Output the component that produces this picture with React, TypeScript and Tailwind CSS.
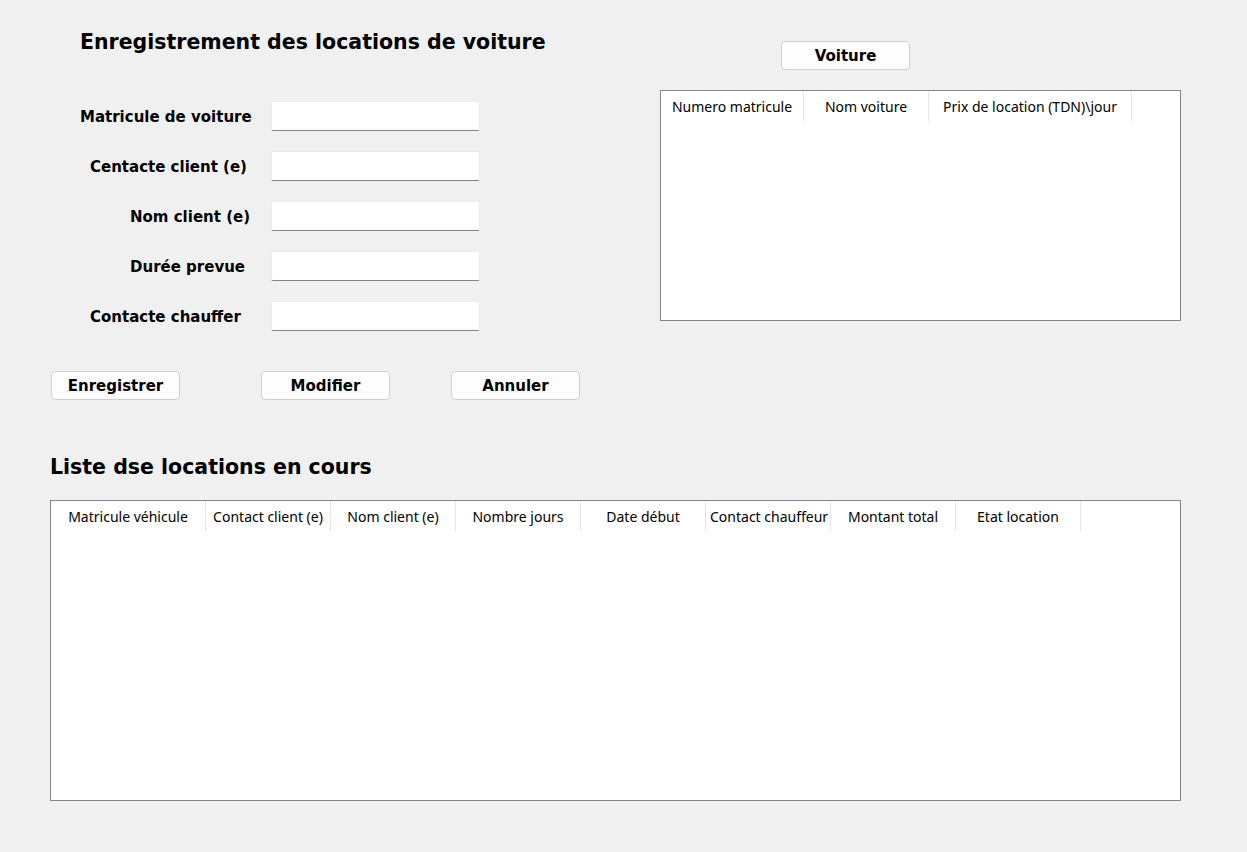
import React from "react";

const bold = { fontFamily: '"DejaVu Sans", Verdana, sans-serif' };
const ui = { fontFamily: '"Noto Sans", "Open Sans", sans-serif' };

function Btn({ label, className = "" }: { label: string; className?: string }) {
  return (
    <div
      className={
        "w-[129px] h-[29px] pt-[2px] flex items-center justify-center rounded-[4px] border border-[#d0d0d0] bg-[#fdfdfd] text-[15px] font-bold text-black " +
        className
      }
      style={bold}
    >
      {label}
    </div>
  );
}

function Field({ label, pad }: { label: string; pad: string }) {
  return (
    <div className="flex items-center h-[30px]">
      <div className={"w-[271px] pt-[2px] text-[15px] font-bold text-black whitespace-nowrap " + pad} style={bold}>
        {label}
      </div>
      <div className="w-[209px] h-[30px] bg-white border border-[#ececec] border-b-[#858585] rounded-[2px]" />
    </div>
  );
}

function Header({ cols }: { cols: { label: string; w: string }[] }) {
  return (
    <div className="flex h-[30px]">
      {cols.map((c) => (
        <div
          key={c.label}
          className={
            "h-[30px] border-r border-[#e5e5e5] overflow-hidden whitespace-nowrap text-center text-[14px] leading-[31px] text-black px-[4px] " +
            c.w
          }
          style={ui}
        >
          {c.label}
        </div>
      ))}
    </div>
  );
}

export default function App() {
  return (
    <div className="w-[1247px] h-[852px] bg-[#f0f0f0] overflow-hidden pt-[29px]">
      <div className="flex">
        <div className="w-[660px]">
          <div className="pl-[80px] h-[26px] text-[20.5px] leading-[26px] font-bold text-black whitespace-nowrap" style={bold}>
            Enregistrement des locations de voiture
          </div>
          <div className="mt-[46px] flex flex-col gap-[20px]">
            <Field label="Matricule de voiture" pad="pl-[80px]" />
            <Field label="Centacte client (e)" pad="pl-[90px]" />
            <Field label="Nom client (e)" pad="pl-[130px]" />
            <Field label="Durée prevue" pad="pl-[130px]" />
            <Field label="Contacte chauffer" pad="pl-[90px]" />
          </div>
          <div className="mt-[40px] flex pl-[51px]">
            <Btn label="Enregistrer" />
            <Btn label="Modifier" className="ml-[81px]" />
            <Btn label="Annuler" className="ml-[61px]" />
          </div>
        </div>
        <div className="w-[521px]">
          <Btn label="Voiture" className="mt-[12px] ml-[121px]" />
          <div className="mt-[20px] h-[231px] bg-white border border-[#82878f]">
            <Header
              cols={[
                { label: "Numero matricule", w: "w-[143px]" },
                { label: "Nom voiture", w: "w-[125px]" },
                { label: "Prix de location (TDN)\\jour", w: "w-[203px]" },
              ]}
            />
          </div>
        </div>
      </div>
      <div className="mt-[54px] pl-[50px] h-[26px] text-[20.5px] leading-[26px] font-bold text-black whitespace-nowrap" style={bold}>
        Liste dse locations en cours
      </div>
      <div className="mt-[20px] ml-[50px] w-[1131px] h-[301px] bg-white border border-[#82878f]">
        <Header
          cols={[
            { label: "Matricule véhicule", w: "w-[155px]" },
            { label: "Contact client (e)", w: "w-[125px]" },
            { label: "Nom client (e)", w: "w-[125px]" },
            { label: "Nombre jours", w: "w-[125px]" },
            { label: "Date début", w: "w-[125px]" },
            { label: "Contact chauffeur", w: "w-[125px]" },
            { label: "Montant total", w: "w-[125px]" },
            { label: "Etat location", w: "w-[125px]" },
          ]}
        />
      </div>
    </div>
  );
}
